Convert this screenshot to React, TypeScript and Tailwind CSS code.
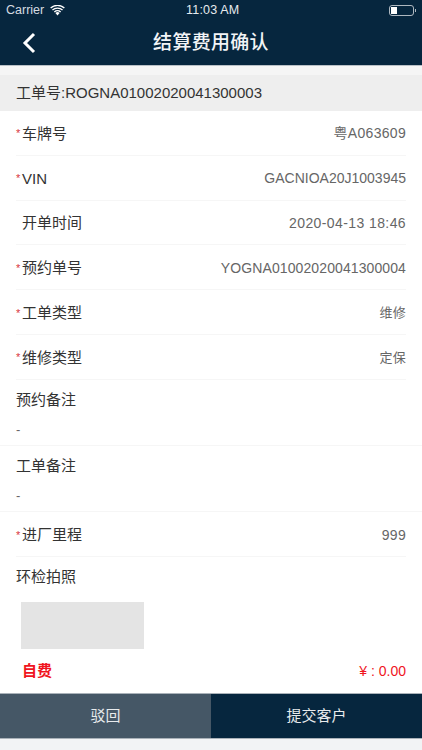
const font = { fontFamily: '"Liberation Sans", "Noto Sans CJK SC", sans-serif' };

function Row({ label, value, star = true, small = false, latin = false, track = "tracking-[0.3px]" }: { label: string; value: string; star?: boolean; small?: boolean; latin?: boolean; track?: string }) {
  return (
    <div className="mx-4 flex h-[44.8px] items-center justify-between border-b border-[#f6f6f6] pt-[2px]">
      <div className="flex items-center">
        <span className="w-[6px] text-[11px] leading-none text-[#d9363e]">{star ? "*" : ""}</span>
        <span className={`${latin ? "pt-[2px]" : ""} text-[15px] text-[#333333]`}>{label}</span>
      </div>
      <span className={`${small ? "text-[13px]" : "text-[14px]"} ${track} text-[#666666]`}>{value}</span>
    </div>
  );
}

function NoteRow({ label }: { label: string }) {
  return (
    <div className="flex h-[66.3px] flex-col border-b border-[#f6f6f6] px-4 pt-[9px]">
      <span className="text-[15px] leading-[22px] text-[#333333]">{label}</span>
      <span className="mt-[10px] text-[13px] leading-[18px] text-[#666666]">-</span>
    </div>
  );
}

export default function App() {
  return (
    <div className="flex h-[750px] w-[422px] flex-col overflow-hidden bg-white" style={font}>
      <div className="h-[65px] bg-[#06263e] text-white">
        <div className="relative flex h-[20px] items-center justify-between px-[6px]">
          <div className="flex items-center gap-[6px]">
            <span className="text-[12.5px] text-[#d5dce1]">Carrier</span>
            <svg width="15" height="11" viewBox="0 0 15 11" fill="white">
              <path d="M7.5 10.5 5.4 8.1a3 3 0 0 1 4.2 0Z" />
              <path d="M3.9 6.5a5.2 5.2 0 0 1 7.2 0l-.9 1a3.9 3.9 0 0 0-5.4 0Z" />
              <path d="M2 4.6a8 8 0 0 1 11 0l-.9 1a6.7 6.7 0 0 0-9.2 0Z" />
              <path d="M0.2 2.6a10.6 10.6 0 0 1 14.6 0l-.9 1A9.3 9.3 0 0 0 1.1 3.6Z" />
            </svg>
          </div>
          <span className="absolute left-[186px] text-[12.5px] tracking-[0.2px] text-[#e6ebee]">11:03 AM</span>
          <svg width="28" height="11" viewBox="0 0 28 11" className="mr-[-1px]">
            <rect x="0.5" y="0.5" width="24" height="10" rx="2.5" fill="none" stroke="#aeb8c0" />
            <rect x="2" y="2" width="6" height="7" fill="white" />
            <rect x="26" y="4" width="1" height="3" fill="#aeb8c0" />
          </svg>
        </div>
        <div className="relative flex h-[45px] items-center justify-center">
          <svg width="14" height="22" viewBox="0 0 14 22" fill="none" stroke="white" strokeWidth="3" className="absolute left-[22px] top-[12px]">
            <path d="M12 2 3 11l9 9" />
          </svg>
          <span className="pt-[2px] text-[19px] font-medium tracking-[0.3px] text-[#f2f4f6]">结算费用确认</span>
        </div>
      </div>
      <div className="h-[10px] border-t border-[#b9c0c6] bg-[#f5f5f5]" />
      <div className="flex h-[36px] items-center bg-[#eeeeee] px-4 text-[15px] text-[#333333]">工单号:ROGNA01002020041300003</div>
      <Row label="车牌号" value="粤A063609" />
      <Row label="VIN" value="GACNIOA20J1003945" latin track="tracking-normal" />
      <Row label="开单时间" value="2020-04-13 18:46" star={false} track="tracking-[0.4px]" />
      <Row label="预约单号" value="YOGNA01002020041300004" track="tracking-[0.1px]" />
      <Row label="工单类型" value="维修" small />
      <Row label="维修类型" value="定保" small />
      <NoteRow label="预约备注" />
      <NoteRow label="工单备注" />
      <Row label="进厂里程" value="999" />
      <div className="flex-1 px-4">
        <div className="pt-[9px] text-[15px] leading-[22px] text-[#333333]">环检拍照</div>
        <div className="ml-[5px] mt-[14px] h-[47px] w-[123px] bg-[#e4e4e4]" />
        <div className="mt-[11px] flex items-center justify-between">
          <span className="ml-[6px] text-[15px] font-bold text-[#f0141e]">自费</span>
          <span className="text-[14px] text-[#f0141e]">¥ : 0.00</span>
        </div>
      </div>
      <div className="flex h-[46px] border-y border-[#aab2b9] text-[15px] text-[#e8ebed]">
        <div className="flex w-1/2 items-center justify-center bg-[#455766]">驳回</div>
        <div className="flex w-1/2 items-center justify-center bg-[#06263e]">提交客户</div>
      </div>
      <div className="h-[11px] bg-[#f2f3f5]" />
    </div>
  );
}
